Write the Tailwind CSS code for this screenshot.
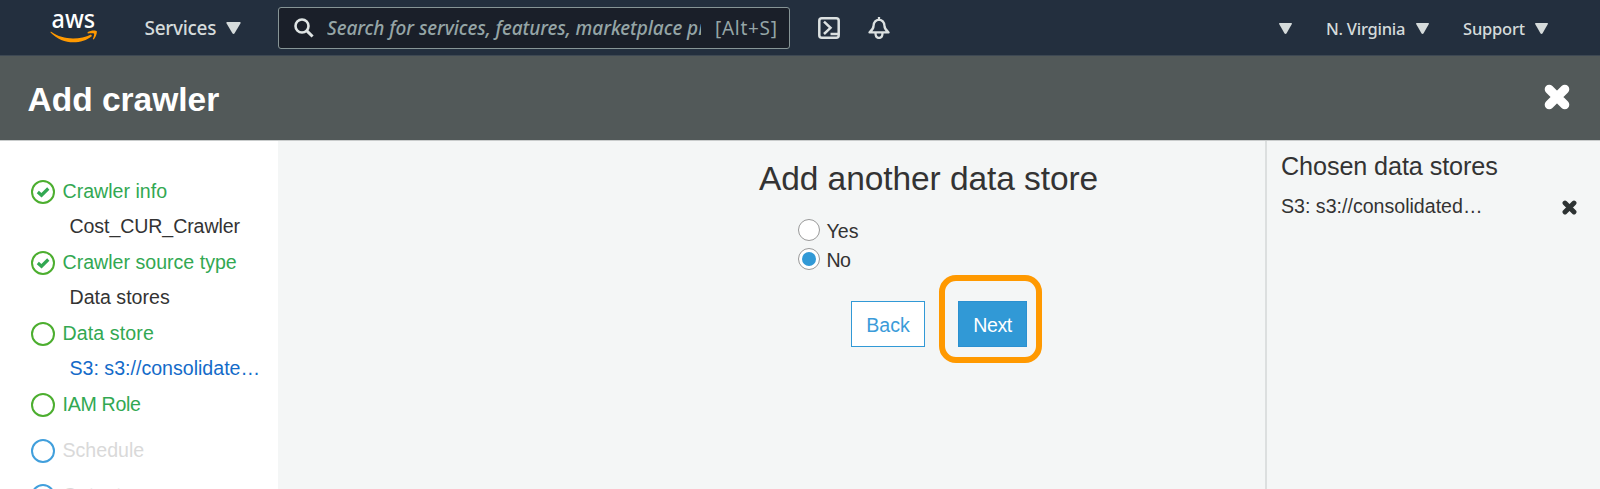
<!DOCTYPE html>
<html lang="en">
<head>
<meta charset="utf-8">
<title>Add crawler</title>
<script src="https://cdn.jsdelivr.net/npm/@tailwindcss/browser@4"></script>
</head>
<body class="w-[1600px] h-[489px] overflow-hidden flex flex-col bg-[#f4f6f6] font-['Liberation_Sans',Arial,sans-serif] text-[19.6px] text-[#333]">
  <header class="h-14 shrink-0 flex items-center bg-[#232f3e] border-b border-[#3d4853] font-['Noto_Sans','Open_Sans',sans-serif] font-medium text-[#d5dbdb]">
    <svg class="ml-[50px] w-12 h-[30px] shrink-0 overflow-visible" viewBox="0 0 48 30">
      <text x="1.6" y="14.6" font-family="Noto Sans, sans-serif" font-size="25.500" font-weight="500" fill="#fff" textLength="43.500" lengthAdjust="spacingAndGlyphs">aws</text>
      <path d="M.8 18.600C8 23.600 15 25.500 23 25.500c6.500 0 13-1.600 18-4.100l1 1.500C37 27.300 30 29.300 23.500 29.300 15 29.300 7 26 .5 19.400z" fill="#f90"/>
      <path d="M37.500 19.300c3-2.300 8.500-2.300 9.200-1.200.5 1-.3 5.800-3 8.300l-.9-.4c1-2.300 1.700-4.700 1.200-5.400-.6-.6-3.300-.6-6.200-.1z" fill="#f90"/>
    </svg>
    <span class="ml-[46.5px] w-[81.5px] mt-[2px] text-[19px] tracking-[-0.3px]">Services</span>
    <svg class="w-[15px] h-3 shrink-0" viewBox="0 0 15 12"><path d="M.3 1Q.3 0 1.200 0h12.600q.9 0 .9 1L8.600 11.200q-1.100 1.400-2.200 0z" fill="#d5dbdb"/></svg>
    <div class="ml-[37px] w-[512px] h-[42px] shrink-0 flex items-center rounded-[3px] border border-[#879596] bg-[#1a1f29] text-[#95a5a6]">
      <svg class="ml-[15px] w-5 h-5 shrink-0" viewBox="0 0 20 20" fill="none" stroke="#dfe4e4" stroke-width="2.600"><circle cx="8" cy="8" r="6.500"/><path d="M12.600 12.600l6 5.900" stroke-width="3"/></svg>
      <span class="ml-[13px] mt-px w-[374px] shrink-0 overflow-hidden whitespace-nowrap italic text-[19px] tracking-[-0.05px]">Search for services, features, marketplace products, and docs</span>
      <span class="ml-[14px] mt-px text-[19px] tracking-[0.7px] font-normal whitespace-nowrap">[Alt+S]</span>
    </div>
    <svg class="ml-[28px] w-[22px] h-[22px] shrink-0" viewBox="0 0 22 22" fill="none" stroke="#dce1e1" stroke-width="2.500"><rect x="1.300" y="1.300" width="19.400" height="19.400" rx="2.500"/><path d="M6 4.600l6.500 6.200L6 17M12.500 17h8"/></svg>
    <svg class="ml-[28px] w-[22px] h-[22px] shrink-0" viewBox="0 0 22 22" fill="none" stroke="#dce1e1" stroke-width="2.300" stroke-linejoin="round"><path d="M11 0v3M1.500 15.400Q5.600 12 5.600 8.500q.5-5.300 5.400-5.800 4.900.5 5.400 5.800 0 3.500 4.100 6.900zM7.500 16c0 6.600 7 6.600 7 0"/></svg>
    <svg class="ml-auto mt-[2px] w-[13px] h-[11px] shrink-0" viewBox="0 0 13 11"><path d="M0 .8Q0 0 .8 0h11.400q.8 0 .8.800L7.600 10.300q-1.100 1.300-2.200 0z" fill="#d5dbdb"/></svg>
    <span class="ml-[34px] mt-[3px] w-[90px] text-[16.500px] tracking-[-0.25px] whitespace-nowrap">N. Virginia</span>
    <svg class="mt-[2px] w-[13px] h-[11px] shrink-0" viewBox="0 0 13 11"><path d="M0 .8Q0 0 .8 0h11.400q.8 0 .8.800L7.600 10.300q-1.100 1.300-2.200 0z" fill="#d5dbdb"/></svg>
    <span class="ml-[34px] mt-[3px] w-[72px] text-[16.500px] tracking-[-0.2px]">Support</span>
    <svg class="mt-[2px] mr-[52px] w-[13px] h-[11px] shrink-0" viewBox="0 0 13 11"><path d="M0 .8Q0 0 .8 0h11.400q.8 0 .8.800L7.600 10.300q-1.100 1.300-2.200 0z" fill="#d5dbdb"/></svg>
  </header>

  <div class="h-[84px] shrink-0 flex items-center justify-between bg-[#525959] pl-[27.5px] pr-[30px]">
    <h1 class="text-[33.5px] font-bold text-white mt-[5px]">Add crawler</h1>
    <svg class="w-[26px] h-[26px] -mt-0.5" viewBox="0 0 26 26" stroke="#fff" stroke-width="9" stroke-linecap="round"><path d="M5.200 5.200l15.600 15.600M20.800 5.200L5.200 20.800"/></svg>
  </div>

  <div class="flex-1 min-h-0 flex border-t border-[#c9cccc]">
    <nav class="w-[278px] shrink-0 overflow-hidden bg-white pt-[33px] pl-[31px] leading-[35px] text-[#333]">
      <div class="h-[35px] flex items-center gap-[7.5px] text-[#32a852]">
        <svg class="w-6 h-6" viewBox="0 0 24 24" fill="none"><circle cx="12" cy="12" r="11" stroke="#4cae2f" stroke-width="2"/><path d="M6.800 12l3.700 3.200 6.800-6.700" stroke="#32a852" stroke-width="3.200"/></svg><span>Crawler info</span>
      </div>
      <div class="h-[36px] pl-[38.5px] tracking-[-0.1px]">Cost_CUR_Crawler</div>
      <div class="h-[35px] flex items-center gap-[7.5px] text-[#32a852]">
        <svg class="w-6 h-6" viewBox="0 0 24 24" fill="none"><circle cx="12" cy="12" r="11" stroke="#4cae2f" stroke-width="2"/><path d="M6.800 12l3.700 3.200 6.800-6.700" stroke="#32a852" stroke-width="3.200"/></svg><span>Crawler source type</span>
      </div>
      <div class="h-[36px] pl-[38.5px]">Data stores</div>
      <div class="h-[35px] flex items-center gap-[7.5px] text-[#32a852]">
        <span class="w-6 h-6 rounded-full border-2 border-[#4cae2f]"></span><span class="tracking-[0.1px]">Data store</span>
      </div>
      <div class="h-[36px] pl-[38.5px] text-[#146bc9]">S3: s3://consolidate…</div>
      <div class="h-[35px] flex items-center gap-[7.5px] text-[#32a852]">
        <span class="w-6 h-6 rounded-full border-2 border-[#4cae2f]"></span><span class="tracking-[-0.3px]">IAM Role</span>
      </div>
      <div class="mt-[11px] h-[35px] flex items-center gap-[7.5px] text-[#d9d9d9]">
        <span class="w-6 h-6 rounded-full border-2 border-[#419fdc]"></span><span>Schedule</span>
      </div>
      <div class="mt-[10px] h-[35px] flex items-center gap-[7.5px] text-[#d9d9d9]">
        <span class="w-6 h-6 rounded-full border-2 border-[#419fdc]"></span><span>Output</span>
      </div>
    </nav>

    <main class="w-[987px] shrink-0 pl-[481px] pt-[18px]">
      <h2 class="text-[33.5px] leading-[40px] tracking-[-0.08px] whitespace-nowrap">Add another data store</h2>
      <div class="mt-[16px] ml-[39px] flex flex-col">
        <label class="h-[29px] flex items-center gap-[6.5px]"><span class="w-[22px] h-[22px] rounded-full border-[1.5px] border-[#999] bg-white"></span><span class="leading-[22px] mt-[2px]">Yes</span></label>
        <label class="h-[29px] flex items-center gap-[6.5px]"><span class="w-[22px] h-[22px] rounded-full border-[1.5px] border-[#999] bg-white flex items-center justify-center"><span class="w-[14px] h-[14px] rounded-full bg-[#3199d6]"></span></span><span class="leading-[22px] mt-[2px] tracking-[-0.6px]">No</span></label>
      </div>
      <div class="mt-[28px] ml-[92px] flex gap-[33px]">
        <div class="w-[74px] h-[46px] pt-[3px] flex items-center justify-center border border-[#3199d6] bg-white text-[#3b9bd9]">Back</div>
        <div class="relative w-[69px] h-[46px] pt-[3px] flex items-center justify-center border border-[#2b90d0] bg-[#3199d6] text-white tracking-[-0.4px]">Next
          <div class="absolute left-[-20px] top-[-27px] w-[103px] h-[88px] border-[6px] border-[#f90] rounded-[17px]"></div>
        </div>
      </div>
    </main>

    <aside class="flex-1 border-l-2 border-[#dcdfdf] pl-[14px] pr-[23px] pt-[11px]">
      <h3 class="text-[25.2px] leading-[28px] tracking-[-0.1px]">Chosen data stores</h3>
      <div class="mt-[13px] flex items-center justify-between leading-[26px]">
        <span>S3: s3://consolidated…</span>
        <svg class="w-[15px] h-[15px] mt-[3px]" viewBox="0 0 26 26" stroke="#2d3333" stroke-width="8.500" stroke-linecap="round"><path d="M5.200 5.200l15.600 15.600M20.800 5.200L5.200 20.800"/></svg>
      </div>
    </aside>
  </div>
</body>
</html>
